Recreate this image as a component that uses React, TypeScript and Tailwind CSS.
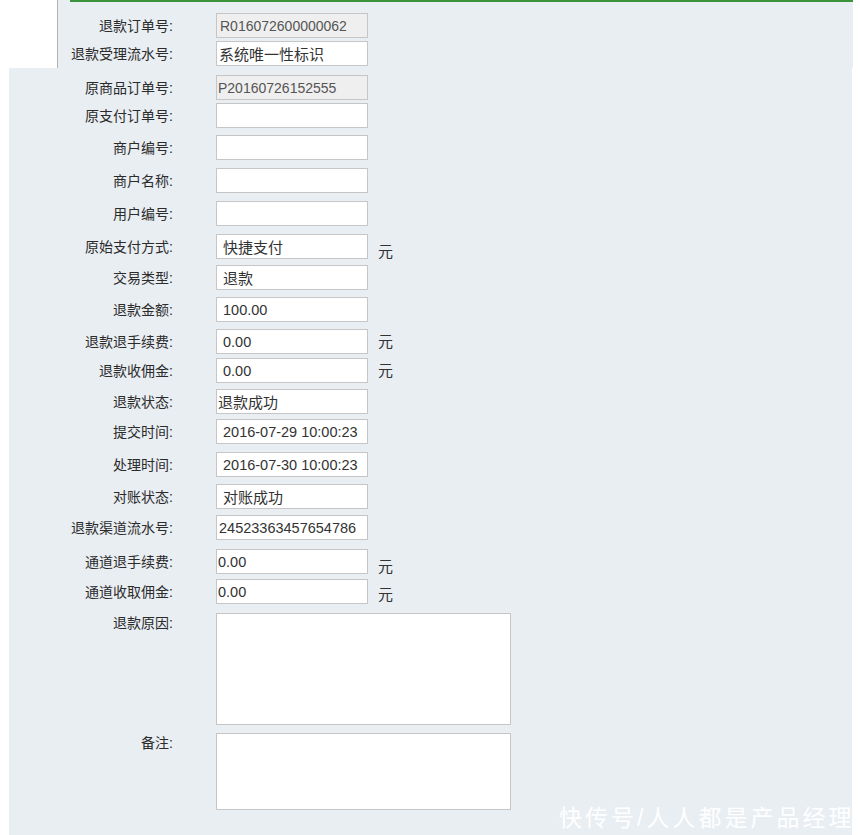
import React from "react";

type Field = {
  label: string;
  value?: string;
  mt: string;
  readOnly?: boolean;
  pad?: string;
  unit?: string; // class for 元 offset
  area?: string; // textarea height
};

const topFields: Field[] = [
  { label: "退款订单号:", value: "R016072600000062", mt: "mt-[11px]", readOnly: true, pad: "pl-[3px]" },
  { label: "退款受理流水号:", value: "系统唯一性标识", mt: "mt-[3px]", pad: "pl-[2px]" },
];

const fields: Field[] = [
  { label: "原商品订单号:", value: "P20160726152555", mt: "mt-[7px]", readOnly: true, pad: "pl-[1px]" },
  { label: "原支付订单号:", mt: "mt-[3px]" },
  { label: "商户编号:", mt: "mt-[7px]" },
  { label: "商户名称:", mt: "mt-[8px]" },
  { label: "用户编号:", mt: "mt-[8px]" },
  { label: "原始支付方式:", value: "快捷支付", mt: "mt-[8px]", unit: "translate-y-[5px]" },
  { label: "交易类型:", value: "退款", mt: "mt-[6px]" },
  { label: "退款金额:", value: "100.00", mt: "mt-[7px]" },
  { label: "退款退手续费:", value: "0.00", mt: "mt-[7px]", unit: "translate-y-0" },
  { label: "退款收佣金:", value: "0.00", mt: "mt-[4px]", unit: "translate-y-0" },
  { label: "退款状态:", value: "退款成功", mt: "mt-[6px]", pad: "pl-[1px]" },
  { label: "提交时间:", value: "2016-07-29 10:00:23", mt: "mt-[5px]" },
  { label: "处理时间:", value: "2016-07-30 10:00:23", mt: "mt-[8px]" },
  { label: "对账状态:", value: "对账成功", mt: "mt-[7px]" },
  { label: "退款渠道流水号:", value: "24523363457654786", mt: "mt-[6px]", pad: "pl-[2px]" },
  { label: "通道退手续费:", value: "0.00", mt: "mt-[9px]", pad: "pl-[1px]", unit: "translate-y-[5px]" },
  { label: "通道收取佣金:", value: "0.00", mt: "mt-[5px]", pad: "pl-[1px]", unit: "translate-y-[3px]" },
  { label: "退款原因:", mt: "mt-[9px]", area: "h-[112px]" },
  { label: "备注:", mt: "mt-[8px]", area: "h-[77px]" },
];

const cjk = "font-[family-name:'Liberation_Sans','Noto_Sans_CJK_SC',sans-serif]";

function Row({ f, labelW }: { f: Field; labelW: string }) {
  if (f.area) {
    return (
      <div className={`flex items-start ${f.mt}`}>
        <div className={`${labelW} text-right text-[14px] leading-[20px] text-[#2b2b2b]`}>{f.label}</div>
        <textarea
          readOnly
          className={`ml-[43px] w-[295px] ${f.area} resize-none border border-[#c6c6c6] bg-white outline-none`}
        />
      </div>
    );
  }
  const cjkValue = f.value && /[\u4e00-\u9fa5]/.test(f.value);
  return (
    <div className={`flex h-[25px] items-center ${f.mt}`}>
      <div className={`${labelW} text-right text-[14px] leading-[20px] text-[#2b2b2b]`}>{f.label}</div>
      <input
        readOnly
        defaultValue={f.value ?? ""}
        className={`ml-[43px] w-[152px] h-[25px] border border-[#c6c6c6] outline-none ${f.pad ?? "pl-[6px]"} ${
          f.readOnly ? "bg-[#efefef] text-[#555] text-[14px]" : "bg-white text-[#333]"
        } ${!f.readOnly && cjkValue ? "text-[15px]" : ""} ${!f.readOnly && !cjkValue ? "text-[14.5px]" : ""}`}
      />
      {f.unit && <span className={`ml-[10px] text-[15px] leading-[20px] text-[#333] ${f.unit}`}>元</span>}
    </div>
  );
}

export default function App() {
  return (
    <div className={`w-[860px] h-[835px] bg-white overflow-hidden ${cjk}`}>
      {/* 上半部分 */}
      <div className="flex h-[68px]">
        <div className="w-[57px] shrink-0 bg-white" />
        <div className="w-[796px] shrink-0 bg-[#e9eef3] border-l border-[#aeb2b6]">
          <div className="ml-[12px] h-[2px] bg-[#3b943b]" />
          {topFields.map((f) => (
            <Row key={f.label} f={f} labelW="w-[115px]" />
          ))}
        </div>
      </div>

      {/* 下半部分 */}
      <div className="flex h-[767px]">
        <div className="w-[9px] shrink-0 bg-white" />
        <div className="relative w-[843px] shrink-0 bg-[#e9eef3]">
          {fields.map((f) => (
            <Row key={f.label} f={f} labelW="w-[164px]" />
          ))}
          <div className="absolute left-[550px] top-[734px] text-[23px] leading-[32px] tracking-[3px] text-white whitespace-nowrap">
            快传号/人人都是产品经理
          </div>
        </div>
      </div>
    </div>
  );
}
